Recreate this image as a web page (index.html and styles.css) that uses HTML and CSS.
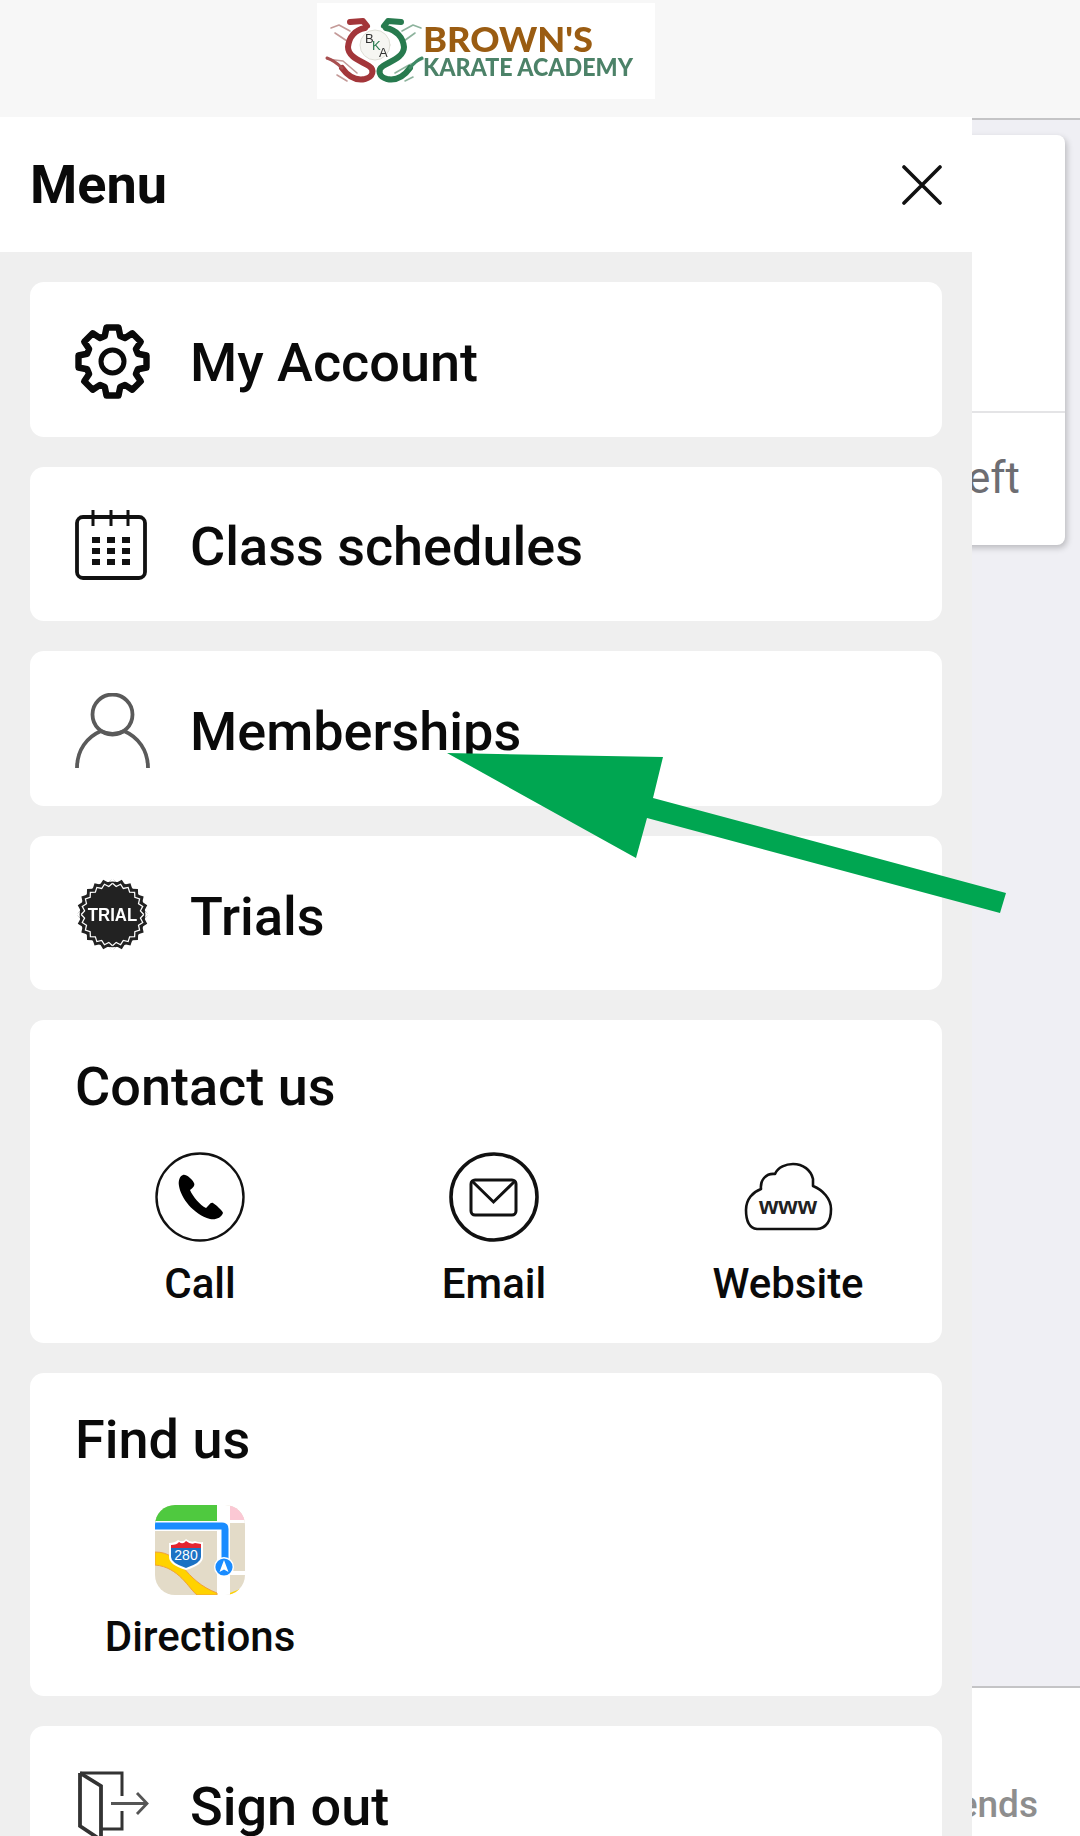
FILE: index.html
```html
<!DOCTYPE html>
<html lang="en">
<head>
    <meta charset="UTF-8">
    <meta name="viewport" content="width=device-width, initial-scale=1.0">
    <title>Brown's Karate Academy</title>
    <link rel="stylesheet" href="styles.css">
</head>
<body>
    <div class="page">
        <header class="topbar">
            <svg class="logo" viewBox="0 0 338 96" width="338" height="96">
                <rect width="338" height="96" fill="#fff"/>
                <g fill="none" stroke-linecap="round" stroke-linejoin="round">
                    <circle cx="58" cy="42" r="15" fill="#f6f6f2" stroke="#deded6"/>
                    <path d="M33 28 L22 22 L14 25 M30 38 L18 30 M40 70 L26 58 L10 56 M30 78 L20 72" stroke="#c49a98" stroke-width="1.6"/>
                    <path d="M33 19 L46 18 L50 23" stroke="#a3363a" stroke-width="6"/>
                    <path d="M48 25 C38 27 32 34 31 44 C31 54 44 58 52 63 C58 67 56 74 48 76 C38 78 30 72 25 65" stroke="#a3363a" stroke-width="6"/>
                    <path d="M25 65 C20 60 16 57 10 55" stroke="#a84f50" stroke-width="3"/>
                    <path d="M85 28 L96 22 L104 25 M87 38 L98 30 M78 70 L92 62 L106 56 M88 78 L96 74" stroke="#8db39d" stroke-width="1.6"/>
                    <path d="M84 19 L71 18 L67 23" stroke="#277a4e" stroke-width="6"/>
                    <path d="M69 25 C79 27 86 34 87 44 C87 54 74 58 66 63 C60 67 62 74 70 76 C80 78 88 72 93 65" stroke="#277a4e" stroke-width="6"/>
                    <path d="M93 65 C97 60 100 57 105 55" stroke="#3f8a66" stroke-width="3"/>
                </g>
                <text class="logo-mono" x="48" y="40">B</text>
                <text class="logo-mono logo-mono-k" x="55" y="47">K</text>
                <text class="logo-mono" x="62" y="54">A</text>
                <text class="logo-brown" x="106" y="49" textLength="170" lengthAdjust="spacingAndGlyphs">BROWN'S</text>
                <text class="logo-karate" x="106" y="73" textLength="210" lengthAdjust="spacingAndGlyphs">KARATE ACADEMY</text>
            </svg>
        </header>

        <main class="behind">
            <div class="status-card">
                <div class="status-body"></div>
                <div class="status-foot">left</div>
            </div>
        </main>

        <footer class="tabbar">
            <span class="tab-label">Friends</span>
        </footer>
    </div>

    <aside class="drawer">
        <div class="drawer-head">
            <h1>Menu</h1>
            <svg class="close-icon" viewBox="0 0 40 40" width="40" height="40">
                <path d="M2 2 L38 38 M38 2 L2 38" fill="none" stroke="#111" stroke-width="3.6" stroke-linecap="round"/>
            </svg>
        </div>

        <div class="drawer-list">
            <div class="menu-card menu-row">
                <span class="row-icon">
                    <svg viewBox="0 0 75 75" width="75" height="75">
                        <path d="M31.5 3.5 L43.5 3.5 L45.25 12.16 L49.94 14.1 L57.29 9.24 L65.76 17.71 L60.9 25.06 L62.84 29.75 L71.5 31.5 L71.5 43.5 L62.84 45.25 L60.9 49.94 L65.76 57.29 L57.29 65.76 L49.94 60.9 L45.25 62.84 L43.5 71.5 L31.5 71.5 L29.75 62.84 L25.06 60.9 L17.71 65.76 L9.24 57.29 L14.1 49.94 L12.16 45.25 L3.5 43.5 L3.5 31.5 L12.16 29.75 L14.1 25.06 L9.24 17.71 L17.71 9.24 L25.06 14.1 L29.75 12.16 Z" fill="none" stroke="#0a0a0a" stroke-width="6.4" stroke-linejoin="round"/>
                        <circle cx="37.5" cy="37.5" r="11.5" fill="none" stroke="#0a0a0a" stroke-width="5"/>
                    </svg>
                </span>
                <span class="row-text">My Account</span>
            </div>

            <div class="menu-card menu-row">
                <span class="row-icon">
                    <svg viewBox="0 0 75 75" width="75" height="75">
                        <rect x="2" y="9" width="68" height="61" rx="6" fill="none" stroke="#111" stroke-width="3.8"/>
                        <path d="M18 2 V18 M36 2 V18 M53 2 V18" fill="none" stroke="#111" stroke-width="3"/>
                        <g fill="#111">
                            <rect x="17" y="29" width="8" height="6"/><rect x="32" y="29" width="8" height="6"/><rect x="47" y="29" width="8" height="6"/>
                            <rect x="17" y="40" width="8" height="6"/><rect x="32" y="40" width="8" height="6"/><rect x="47" y="40" width="8" height="6"/>
                            <rect x="17" y="51" width="8" height="6"/><rect x="32" y="51" width="8" height="6"/><rect x="47" y="51" width="8" height="6"/>
                        </g>
                    </svg>
                </span>
                <span class="row-text">Class schedules</span>
            </div>

            <div class="menu-card menu-row">
                <span class="row-icon">
                    <svg viewBox="0 0 75 75" width="75" height="75">
                        <circle cx="37.5" cy="21.5" r="20" fill="none" stroke="#5a5a5a" stroke-width="3.8"/>
                        <path d="M2 75 C2 57 12 44 26 38 M73 75 C73 57 63 44 49 38 M26 38 Q37.5 44 49 38" fill="none" stroke="#5a5a5a" stroke-width="3.8"/>
                    </svg>
                </span>
                <span class="row-text">Memberships</span>
            </div>

            <div class="menu-card menu-row">
                <span class="row-icon">
                    <svg viewBox="-36.5 -35.5 73 73" width="75" height="75">
                        <defs>
                            <polyline id="badge-q" points="0,-35 4.11,-31.23 9.06,-33.81 12.06,-29.1 17.5,-30.31 19.18,-24.99 24.75,-24.75 24.99,-19.18 30.31,-17.5 29.1,-12.06 33.81,-9.06 31.23,-4.11 35,0"/>
                        </defs>
                        <g fill="#222">
                            <circle r="32"/>
                            <use href="#badge-q"/>
                            <use href="#badge-q" transform="rotate(90)"/>
                            <use href="#badge-q" transform="rotate(180)"/>
                            <use href="#badge-q" transform="rotate(270)"/>
                        </g>
                        <g fill="none" stroke="#fff" stroke-width="1.4" transform="scale(.87)">
                            <use href="#badge-q"/>
                            <use href="#badge-q" transform="rotate(90)"/>
                            <use href="#badge-q" transform="rotate(180)"/>
                            <use href="#badge-q" transform="rotate(270)"/>
                        </g>
                        <text class="badge-text" x="0" y="6" text-anchor="middle" textLength="48" lengthAdjust="spacingAndGlyphs">TRIAL</text>
                    </svg>
                </span>
                <span class="row-text">Trials</span>
            </div>

            <div class="menu-card group-card">
                <h2>Contact us</h2>
                <div class="group-grid">
                    <div class="group-item">
                        <svg viewBox="0 0 90 90" width="90" height="90">
                            <circle cx="45" cy="45" r="43.5" fill="none" stroke="#111" stroke-width="2.4"/>
                            <path d="M28 23 C25 24 23 28 24 34 C26 46 38 62 55 67 C61 68 66 66 68 61 C68 59 60 52 58 51 C55 50 54 54 51 56 C45 53 38 45 35 38 C39 35 40 33 39 31 C37 27 31 22 28 23 Z" fill="#000"/>
                        </svg>
                        <span>Call</span>
                    </div>
                    <div class="group-item">
                        <svg viewBox="0 0 90 90" width="90" height="90">
                            <circle cx="45" cy="45" r="43" fill="none" stroke="#111" stroke-width="3.6"/>
                            <rect x="22" y="28" width="45" height="35" rx="4" fill="none" stroke="#111" stroke-width="3"/>
                            <path d="M23 29 L44.5 50 L66 29" fill="none" stroke="#111" stroke-width="3"/>
                        </svg>
                        <span>Email</span>
                    </div>
                    <div class="group-item">
                        <svg viewBox="0 0 90 90" width="90" height="90">
                            <path d="M14 77 C6 76 3 68 3 58 C3 47 10 40 18 37 C17 28 23 21 32 22 C35 15 43 12 50 12 C60 12 68 18 70 27 L70 34 C80 38 88 47 88 57 C88 68 84 76 74 77 Z" fill="none" stroke="#111" stroke-width="2.6" stroke-linejoin="round"/>
                            <text class="www-text" x="45" y="62" text-anchor="middle" textLength="58" lengthAdjust="spacingAndGlyphs">www</text>
                        </svg>
                        <span>Website</span>
                    </div>
                </div>
            </div>

            <div class="menu-card group-card">
                <h2>Find us</h2>
                <div class="group-grid">
                    <div class="group-item">
                        <svg viewBox="0 0 90 90" width="90" height="90">
                            <defs>
                                <clipPath id="map-clip"><rect width="90" height="90" rx="20"/></clipPath>
                            </defs>
                            <g clip-path="url(#map-clip)">
                                <rect width="90" height="90" fill="#e3dbc8"/>
                                <rect width="62" height="18" fill="#4fc93f"/>
                                <rect x="62" width="13" height="90" fill="#fff"/>
                                <rect x="75" width="15" height="15" fill="#fbc8d4"/>
                                <rect x="75" y="15" width="15" height="3" fill="#fff"/>
                                <rect x="75" y="66" width="15" height="4" fill="#fff"/>
                                <path d="M0 47 C14 47 20 54 28 62 C36 72 46 82 62 88 V90 H42 C34 84 24 62 0 60 Z" fill="#ffd200" stroke="#f0a03c" stroke-width="1"/>
                                <path d="M75 88 L90 82 L90 90 L75 90 Z" fill="#ffd200"/>
                                <path d="M0 21 H67 Q70 21 70 24 V60" fill="none" stroke="#fff" stroke-width="10"/>
                                <path d="M0 21 H67 Q70 21 70 24 V60" fill="none" stroke="#1a8cff" stroke-width="7"/>
                                <path d="M14 38 Q20 38 23 35 Q28 38 31 34 Q36 38 40 36 Q44 38 48 37 V52 Q48 60 31 65 Q14 60 14 52 Z" fill="#fff"/>
                                <path d="M16 40 Q22 40 24 37 Q28 40 31 36 Q36 40 40 38 L46 39 V43 H16 Z" fill="#e32530"/>
                                <path d="M16 43 H46 V52 Q46 58 31 63 Q16 58 16 52 Z" fill="#1b72c4"/>
                                <text class="map-text" x="31" y="55" text-anchor="middle">280</text>
                                <circle cx="69" cy="62" r="10" fill="#fff"/>
                                <circle cx="69" cy="62" r="8.6" fill="#1a8cff"/>
                                <path d="M69 55 L73.5 67 L69 64.5 L64.5 67 Z" fill="#fff"/>
                            </g>
                        </svg>
                        <span>Directions</span>
                    </div>
                </div>
            </div>

            <div class="menu-card menu-row">
                <span class="row-icon">
                    <svg viewBox="0 0 75 75" width="75" height="75">
                        <path d="M5 5 H47 V28 M47 43 V61 H26" fill="none" stroke="#333" stroke-width="3"/>
                        <path d="M5 5 V58 L26 72 M5 5 L26 18 V75" fill="none" stroke="#333" stroke-width="3.8"/>
                        <path d="M36 35.5 H72 M62 25 L72 35.5 L62 46" fill="none" stroke="#555" stroke-width="2.8"/>
                    </svg>
                </span>
                <span class="row-text">Sign out</span>
            </div>
        </div>
    </aside>

    <svg class="arrow" viewBox="0 0 1080 1836" width="1080" height="1836">
        <polygon points="447,753 663,757 653,798 1006,893 1000,913 647,818 636,858" fill="#00a651"/>
    </svg>
</body>
</html>
```

FILE: styles.css
```css
* {
    box-sizing: border-box;
}

html, body {
    margin: 0;
    height: 1836px;
    overflow: hidden;
}

body {
    position: relative;
    font-family: Roboto, "Liberation Sans", sans-serif;
    background: #efeff4;
    color: #0a0a0a;
}

.page {
    display: flex;
    flex-direction: column;
    height: 1836px;
}

.topbar {
    height: 120px;
    padding: 3px 108px 0 0;
    background: #f7f7f7;
    border-bottom: 2px solid #c4c4c6;
    display: flex;
    justify-content: center;
    flex-shrink: 0;
}

.logo {
    display: block;
    filter: blur(.7px);
}

.logo-brown {
    font-family: Lato, sans-serif;
    font-weight: 900;
    font-size: 35px;
    fill: #9a5c12;
}

.logo-karate {
    font-family: Lato, sans-serif;
    font-weight: 900;
    font-size: 25px;
    fill: #4c8268;
}

.logo-mono {
    font-family: "Liberation Sans", sans-serif;
    font-size: 13px;
    fill: #333;
}

.logo-mono-k {
    fill: #277a4e;
}

.behind {
    flex: 1;
    padding: 15px 15px 0 0;
    display: flex;
    justify-content: flex-end;
    align-items: flex-start;
}

.status-card {
    width: 800px;
    height: 410px;
    background: #fff;
    border-radius: 8px;
    box-shadow: 2px 3px 6px rgba(0, 0, 0, .22);
    display: flex;
    flex-direction: column;
}

.status-body {
    height: 278px;
    border-bottom: 2px solid #e4e4e6;
}

.status-foot {
    flex: 1;
    display: flex;
    align-items: center;
    justify-content: flex-end;
    padding: 0 45px 2px 0;
    font-size: 44px;
    color: #6d6d72;
}

.tabbar {
    height: 150px;
    flex-shrink: 0;
    background: #fff;
    border-top: 2px solid #c4c4c6;
    display: flex;
    justify-content: flex-end;
    align-items: flex-end;
    padding: 0 42px 10px 0;
}

.tab-label {
    font-size: 37px;
    font-weight: 500;
    color: #8e8e8e;
}

.drawer {
    position: absolute;
    top: 117px;
    left: 0;
    bottom: 0;
    width: 972px;
    background: #efefef;
    overflow: hidden;
}

.drawer-head {
    height: 135px;
    background: #fff;
    display: flex;
    align-items: center;
    justify-content: space-between;
    padding: 0 30px;
}

.drawer-head h1 {
    margin: 0;
    font-size: 54px;
    font-weight: 700;
}

.drawer-list {
    padding: 30px;
    display: flex;
    flex-direction: column;
    gap: 30px;
}

.menu-card {
    background: #fff;
    border-radius: 14px;
    flex-shrink: 0;
}

.menu-row {
    height: 154.6px;
    display: flex;
    align-items: center;
    padding-left: 45px;
    gap: 40px;
}

.row-icon {
    display: flex;
    width: 75px;
    height: 75px;
    margin-top: 4px;
}

.row-icon svg {
    filter: blur(.4px);
}

.row-text {
    font-size: 54px;
    font-weight: 500;
    padding-top: 6px;
}

.group-card {
    height: 323px;
    padding-top: 37px;
}

.group-card h2 {
    margin: 0 0 35px 45px;
    font-size: 54px;
    line-height: 60px;
    font-weight: 500;
}

.group-grid {
    display: grid;
    grid-template-columns: repeat(3, 294px);
    padding-left: 23px;
}

.group-item {
    display: flex;
    flex-direction: column;
    align-items: center;
    gap: 17px;
    font-size: 42px;
    font-weight: 500;
    line-height: 50px;
}

.group-item svg {
    display: block;
}

.badge-text {
    font-family: "Liberation Sans", sans-serif;
    font-weight: 700;
    font-size: 18px;
    fill: #fff;
}

.www-text {
    font-family: "Liberation Sans", sans-serif;
    font-weight: 700;
    font-size: 24px;
    fill: #222;
}

.map-text {
    font-family: "Liberation Sans", sans-serif;
    font-size: 14px;
    fill: #fff;
}

.arrow {
    position: absolute;
    top: 0;
    left: 0;
    pointer-events: none;
}
```
